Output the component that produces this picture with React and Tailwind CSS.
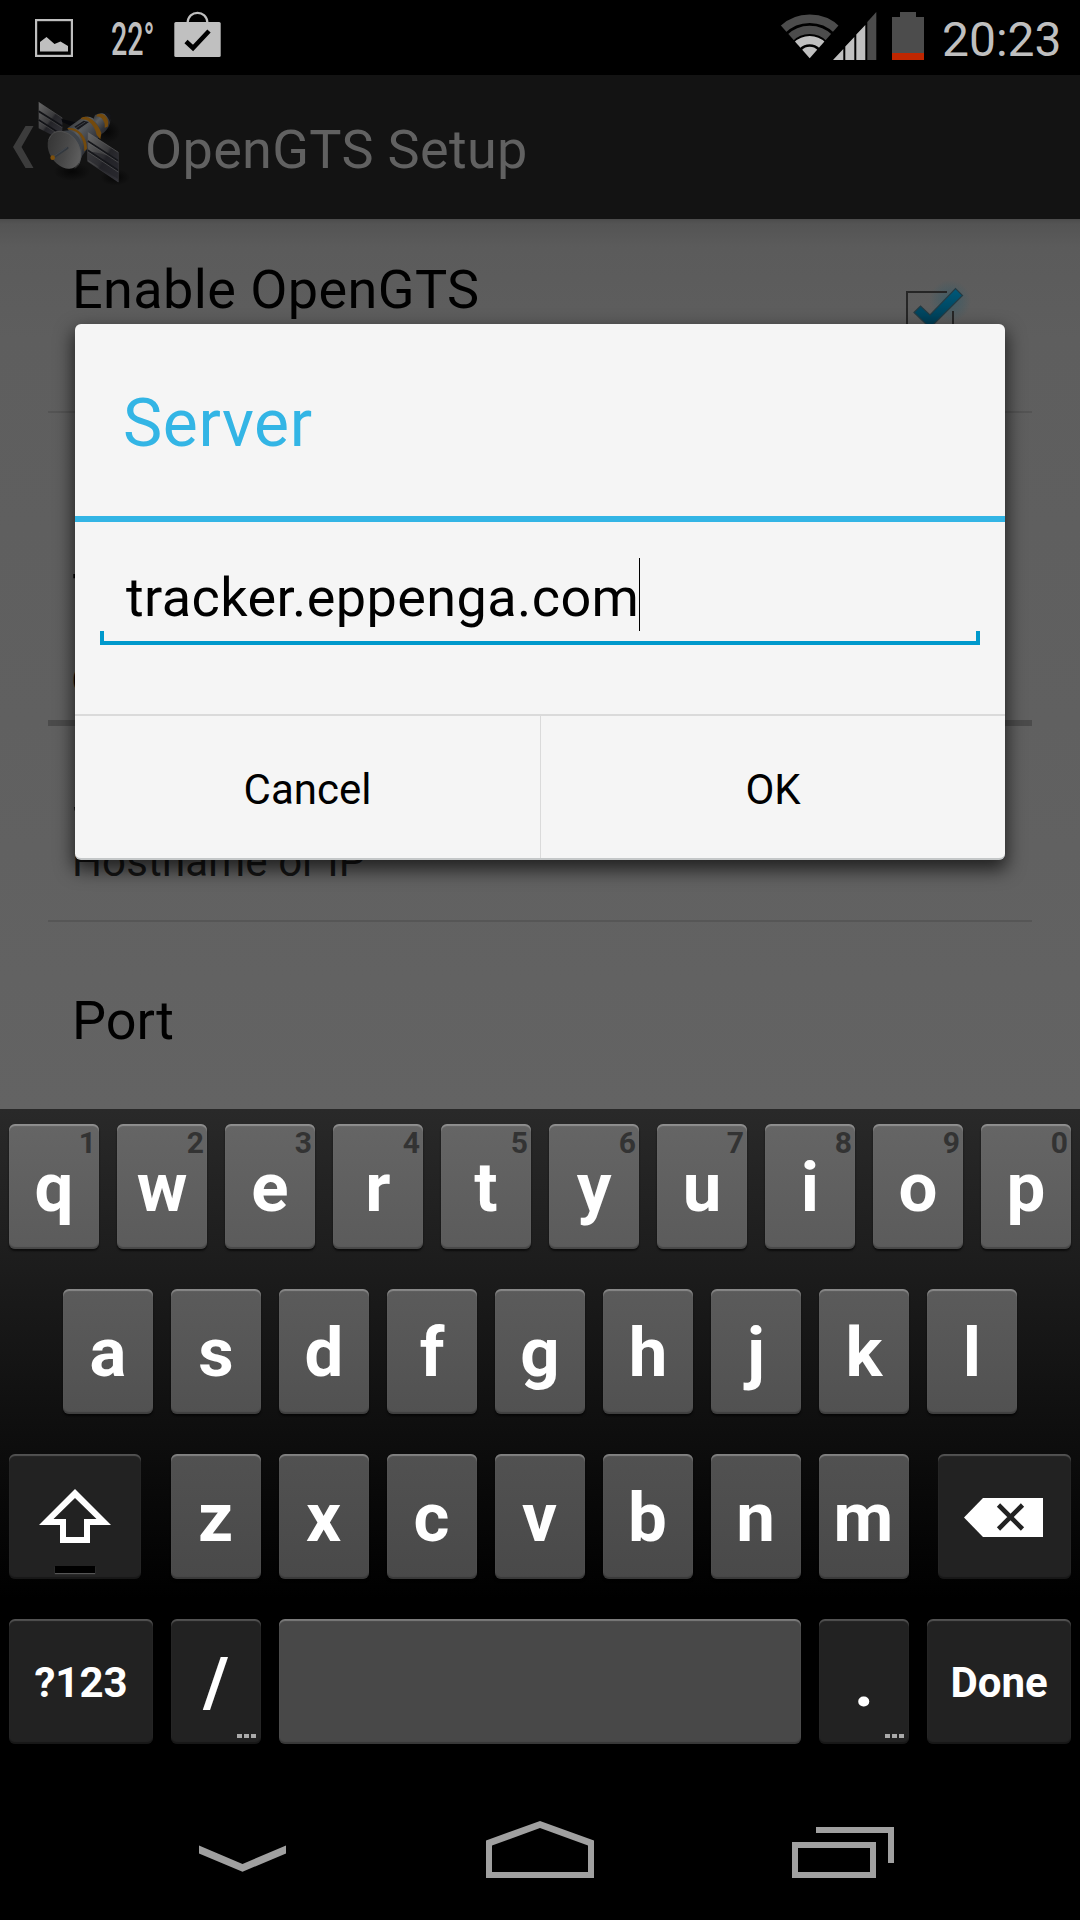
const topRow = ['q', 'w', 'e', 'r', 't', 'y', 'u', 'i', 'o', 'p'];
const homeRow = ['a', 's', 'd', 'f', 'g', 'h', 'j', 'k', 'l'];
const bottomRow = ['z', 'x', 'c', 'v', 'b', 'n', 'm'];

function StatusBar() {
  return (
    <header className="flex h-[75px] shrink-0 bg-black text-[#bfbfbf]">
      <svg className="ml-[35px] mt-[19px] h-[38px] w-[38px]" viewBox="0 0 38 38">
        <rect x="1" y="1" width="36" height="36" fill="none" stroke="#bfbfbf" strokeWidth="2.4" />
        <path d="M5 23 L11.500 18 L19.500 25 L25.500 22.500 L33 27 V32.500 H5 Z" fill="#bfbfbf" />
      </svg>
      <div className="ml-[38px] mt-[11px] w-[63px] origin-left scale-x-[0.61] text-[47px] font-medium leading-[56px]">22°</div>
      <svg className="mt-[11px] h-[48px] w-[48px]" viewBox="0 0 48 48">
        <path d="M13.500 12 C14 -1.500 33 -1.500 33.500 12" fill="none" stroke="#bfbfbf" strokeWidth="2.200" />
        <rect x="0.300" y="11" width="46.400" height="35" rx="1.500" fill="#c0c0c0" />
        <path d="M12 30.500 L19 37 L35 20" fill="none" stroke="#000" strokeWidth="4.600" />
      </svg>
      <div className="ml-auto flex pt-[12px]">
        <svg className="h-[48px] w-[97px]" viewBox="0 0 97 48">
          <clipPath id="wifi-cone"><path d="M29.700 46.300 L-10.300 0.800 V-20 H69.700 V0.800 Z" /></clipPath>
          <g clipPath="url(#wifi-cone)" fill="none">
            <circle cx="29.700" cy="46.300" r="39.500" stroke="#4c4c4c" strokeWidth="8.400" />
            <circle cx="29.700" cy="46.300" r="28.400" stroke="#4c4c4c" strokeWidth="8.400" />
            <circle cx="29.700" cy="46.300" r="18.200" stroke="#c0c0c0" strokeWidth="8.300" />
            <circle cx="29.700" cy="46.300" r="11.500" fill="#c0c0c0" />
          </g>
          <path d="M53 48 L63.300 37 V48 Z M65.300 34.500 L74.300 25 V48 H65.300 Z M76.300 22.500 L85.300 13 V48 H76.300 Z" fill="#c0c0c0" />
          <path d="M87.300 10 L96.300 0 V48 H87.300 Z" fill="#4c4c4c" />
        </svg>
        <svg className="ml-[15px] h-[48px] w-[32px]" viewBox="0 0 32 48">
          <path d="M0 5 H8 V0 H24 V5 H32 V48 H0 Z" fill="#4c4c4c" />
          <rect y="41" width="32" height="7" fill="#bf2600" />
        </svg>
        <div className="ml-[18px] w-[138px] whitespace-nowrap text-[48px] leading-[56px]">20:23</div>
      </div>
    </header>
  );
}

function Satellite() {
  return (
    <svg className="h-[87px] w-[94px]" viewBox="110 60 282 261">
      <defs>
        <linearGradient id="panel" x1="0" y1="0" x2="1" y2="1">
          <stop offset="0" stopColor="#686868" />
          <stop offset="0.500" stopColor="#3a3a3c" />
          <stop offset="0.560" stopColor="#242428" />
          <stop offset="1" stopColor="#34343a" />
        </linearGradient>
        <linearGradient id="body" x1="0" y1="0" x2="0.900" y2="1">
          <stop offset="0" stopColor="#26282b" />
          <stop offset="0.350" stopColor="#5a5d60" />
          <stop offset="0.700" stopColor="#303238" />
          <stop offset="1" stopColor="#202227" />
        </linearGradient>
        <linearGradient id="dish" x1="0" y1="0" x2="0.700" y2="1">
          <stop offset="0" stopColor="#303030" />
          <stop offset="0.600" stopColor="#484848" />
          <stop offset="1" stopColor="#606060" />
        </linearGradient>
        <radialGradient id="ground">
          <stop offset="0" stopColor="#060606" />
          <stop offset="1" stopColor="#060606" stopOpacity="0" />
        </radialGradient>
      </defs>
      <ellipse cx="215" cy="275" rx="55" ry="28" fill="url(#ground)" />
      <ellipse cx="345" cy="292" rx="45" ry="25" fill="url(#ground)" />
      <ellipse cx="320" cy="155" rx="40" ry="34" fill="url(#ground)" />
      <path d="M115 66 L186 114 V165 L150 163 L115 145 Z" fill="url(#panel)" />
      <path d="M115 94 L186 139 M115 120 L186 166" stroke="#111216" strokeWidth="6" />
      <path d="M115 67 L186 114 M115 98 L186 143 M115 124 L176 163" stroke="#5c5c5c" strokeWidth="1.500" fill="none" />
      <path d="M183 117 L232 128 L218 140 L186 126 Z" fill="#08090d" />
      <path d="M284 105 Q310 91 328 112 Q335 130 318 150 Q304 167 296 160 L276 125 Z" fill="url(#body)" />
      <path d="M292 103 Q308 98 318 111 Q327 124 322 140 L313 143 Q315 127 304 115 Q298 109 287 109 Z" fill="#744a0c" />
      <path d="M308 99 Q325 94 331 106 L329 126 Q321 106 308 99 Z" fill="#15161b" />
      <path d="M202 144 L244 114 Q261 104 278 115 L302 148 L303 166 L262 205 L235 242 L213 180 Z" fill="url(#body)" />
      <path d="M242 114 Q258 104 276 119 Q294 134 303 159 L300 178 L289 165 Q284 138 263 122 Q254 116 242 118 Z" fill="#744a0c" />
      <path d="M222 140 L250 122 L266 126 L233 149 Z" fill="#17181d" />
      <path d="M228 143 L255 126 M238 148 L266 131" stroke="#505357" strokeWidth="2" />
      <path d="M204 144 Q225 142 243 160 Q260 180 260 206 L252 214 Q253 184 236 163 Q223 150 200 147 Z" fill="#744a0c" />
      <path d="M187 153 Q218 145 235 172 Q249 194 244 231 L237 252 L208 181 Z" fill="#3e4349" />
      <ellipse cx="192" cy="209" rx="45" ry="61" transform="rotate(-32 192 209)" fill="url(#dish)" />
      <path d="M145 180 Q155 151 184 154 Q230 164 241 216 Q244 250 224 265" fill="none" stroke="#565656" strokeWidth="2" />
      <path d="M160 232 L201 204" stroke="#33383e" strokeWidth="7" strokeLinecap="round" />
      <path d="M160 229 L200 202" stroke="#555a60" strokeWidth="1.500" />
      <circle cx="157" cy="233" r="7" fill="#7d500c" />
      <path d="M262 157 L354 217 V306 L262 244 Z" fill="url(#panel)" />
      <path d="M262 215 Q305 215 354 243 V298 L262 239 Z" fill="#202127" fillOpacity="0.550" />
      <path d="M262 183 L354 243 M262 211 L354 272" stroke="#15161a" strokeWidth="6" />
      <path d="M262 157 L354 217 M262 187 L354 247 M262 215 L354 276" stroke="#696969" strokeWidth="1.600" />
      <path d="M262 157 V244 L354 306 V217" fill="none" stroke="#44444a" strokeWidth="1.500" />
    </svg>
  );
}

function ActionBar() {
  return (
    <div className="flex h-[144px] shrink-0 items-start bg-[#131313] text-[#616161]">
      <svg className="ml-[13px] mt-[51px] h-[42px] w-[21px]" viewBox="0 0 21 42">
        <path d="M12.500 0 H20.500 L8.500 21 L20.500 42 H12.500 L0 21 Z" fill="#3c3c3c" />
      </svg>
      <div className="ml-[3px] mt-[25px]"><Satellite /></div>
      <h1 className="ml-[14px] mt-[43px] whitespace-nowrap text-[54px] font-normal leading-[64px] tracking-[0.33px]">OpenGTS Setup</h1>
    </div>
  );
}

function Settings() {
  return (
    <main className="flex h-[890px] shrink-0 flex-col overflow-hidden bg-[linear-gradient(180deg,#4b4b4b_0px,#4f4f4f_2px,#545454_5px,#5b5b5b_28px,#5e5e5e_120px,#606060_500px,#636363_890px)] px-[48px] text-black">
      <section className="flex h-[194px] justify-between border-b-2 border-[#545454] pl-[24px] pr-[64px]">
        <div className="mt-[39px] whitespace-nowrap text-[54px] leading-[64px] tracking-[0.4px]">Enable OpenGTS</div>
        <svg className="mt-[62px] h-[72px] w-[72px] overflow-visible" viewBox="0 0 72 72">
          <defs>
            <linearGradient id="tick" x1="0" y1="0" x2="0" y2="1">
              <stop offset="0" stopColor="#00597a" />
              <stop offset="1" stopColor="#003a50" />
            </linearGradient>
            <radialGradient id="glow">
              <stop offset="0" stopColor="#2f5a68" />
              <stop offset="1" stopColor="#2f5a68" stopOpacity="0" />
            </radialGradient>
          </defs>
          <circle cx="54" cy="20" r="21" fill="url(#glow)" fillOpacity="0.700" />
          <path d="M51 11 H11 V58 H57 V30" fill="none" stroke="#262626" strokeWidth="2" />
          <path d="M18 31.500 L24.500 25 L34 34 L59.500 7.500 L66.500 14.500 L34 47 Z" fill="url(#tick)" stroke="#263b43" strokeWidth="1.200" />
        </svg>
      </section>
      <section className="h-[229px] pl-[24px] pt-[149px] text-[54px] leading-[64px]">T</section>
      <section className="h-[84px] border-b-[6px] border-[#4b4b4b] pl-[24px] pt-[15px] text-[42px] font-bold leading-[48px]">O</section>
      <section className="h-[196px] border-b-2 border-[#565656] pl-[24px] pt-[42px]">
        <div className="text-[54px] leading-[64px]">Server</div>
        <div className="mt-[6px] whitespace-nowrap text-[42px] leading-[48px] tracking-[0.15px] text-[#151515]">Hostname or IP</div>
      </section>
      <section className="pl-[24px] pt-[67px] text-[54px] leading-[64px]">Port</section>
    </main>
  );
}

function ServerDialog() {
  return (
    <div className="absolute left-[75px] top-[324px] flex h-[536px] w-[930px] flex-col overflow-hidden rounded-[6px] border-b-2 border-[#c4c7c8] bg-[#f5f5f5] text-black">
      <div className="h-[198px] shrink-0 border-b-[6px] border-[#33b5e5] pl-[48px] pt-[62px] text-[66px] leading-[76px] tracking-[0.6px] text-[#33b5e5]">Server</div>
      <div className="flex h-[192px] shrink-0 flex-col px-[25px] pt-[36px]">
        <div className="flex h-[73px] pl-[26px]">
          <span className="mt-[8px] whitespace-nowrap text-[54px] leading-[64px] tracking-[0.42px]">tracker.eppenga.com</span>
          <span className="h-[73px] w-px bg-black" />
        </div>
        <div className="h-[14px] border-x-4 border-b-4 border-[#0099cc]" />
      </div>
      <div className="grid min-h-0 grow grid-cols-[465px_1fr] border-t-2 border-[#dadada] text-center text-[42px] leading-[48px]">
        <div className="pt-[50px]">Cancel</div>
        <div className="border-l border-[#dadada] pt-[50px]">OK</div>
      </div>
    </div>
  );
}

const keyBase = 'relative flex h-[125px] shrink-0 justify-center rounded-[6px] font-bold text-white ';
const lightKey = 'shadow-[inset_0_2px_1px_rgba(255,255,255,0.28),inset_0_-2px_1px_rgba(0,0,0,0.22),0_2px_2px_rgba(0,0,0,0.6)] ';
const darkKey = 'bg-[#222222] shadow-[inset_0_2px_1px_rgba(255,255,255,0.22),inset_0_-2px_1px_rgba(0,0,0,0.3)] ';

function Letter({ label, tone, hint }) {
  return (
    <div className={keyBase + lightKey + 'w-[90px] ' + tone}>
      <span className="mt-[24px] text-[69px] leading-[80px]">{label}</span>
      {hint && <span className="absolute right-[3px] top-px text-[30px] leading-[36px] text-[#333333]">{hint}</span>}
    </div>
  );
}

function MoreDots() {
  return (
    <div className="absolute bottom-[6px] right-[5px] flex gap-[2px]">
      <i className="h-[4px] w-[5px] bg-[#aaaaaa]" />
      <i className="h-[4px] w-[5px] bg-[#aaaaaa]" />
      <i className="h-[4px] w-[5px] bg-[#aaaaaa]" />
    </div>
  );
}

function Keyboard() {
  return (
    <section className="flex h-[668px] shrink-0 flex-col gap-[40px] bg-[linear-gradient(180deg,#292929_0px,#1c1c1c_160px,#0e0e0e_325px,#000_490px)] px-[9px] pt-[15px]">
      <div className="flex gap-[18px]">
        {topRow.map((k, i) => (
          <Letter key={k} label={k} hint={String((i + 1) % 10)} tone="bg-linear-to-b from-[#656565] to-[#5b5b5b]" />
        ))}
      </div>
      <div className="flex gap-[18px] pl-[54px]">
        {homeRow.map((k) => <Letter key={k} label={k} tone="bg-linear-to-b from-[#5b5b5b] to-[#515151]" />)}
      </div>
      <div className="flex justify-between">
        <div className={keyBase + darkKey + 'w-[132px]'}>
          <svg className="mt-[35px] h-[54px] w-[72px]" viewBox="0 0 72 54">
            <path fillRule="evenodd" fill="#fff" d="M36 0 L72 36 H51 V54 H21 V36 H0 Z M36 9 L14.500 30 H27 V48 H45 V30 H57.500 Z" />
          </svg>
          <div className="absolute bottom-[6px] left-[46px] h-[7px] w-[40px] bg-black shadow-[0_1px_1px_#555]" />
        </div>
        <div className="flex gap-[18px]">
          {bottomRow.map((k) => <Letter key={k} label={k} tone="bg-linear-to-b from-[#515151] to-[#494949]" />)}
        </div>
        <div className={keyBase + darkKey + 'w-[133px]'}>
          <svg className="-ml-[2px] mt-[44px] h-[39px] w-[79px]" viewBox="0 0 79 39">
            <path d="M0 19.500 L19 0 H79 V39 H19 Z" fill="#fff" />
            <path d="M34.500 7 L58.500 31 M58.500 7 L34.500 31" stroke="#222" strokeWidth="4.600" />
          </svg>
        </div>
      </div>
      <div className="flex gap-[18px]">
        <div className={keyBase + darkKey + 'w-[144px]'}><span className="mt-[40px] text-[42px] leading-[48px]">?123</span></div>
        <div className={keyBase + darkKey + 'w-[90px]'}><span className="mt-[24px] text-[69px] leading-[80px]">/</span><MoreDots /></div>
        <div className={keyBase + lightKey + 'w-[522px] bg-[#484848]'} />
        <div className={keyBase + darkKey + 'w-[90px]'}><span className="mt-[24px] text-[69px] leading-[80px]">.</span><MoreDots /></div>
        <div className={keyBase + darkKey + 'w-[144px]'}><span className="mt-[40px] text-[42px] leading-[48px]">Done</span></div>
      </div>
    </section>
  );
}

function NavBar() {
  return (
    <nav className="flex grow items-start bg-black">
      <svg className="ml-[199px] mt-[68px] h-[27px] w-[87px]" viewBox="0 0 87 27">
        <path d="M0 0.500 L43.500 19 L87 0.500 V8.500 L43.500 26.800 L0 8.500 Z" fill="#a0a0a0" />
      </svg>
      <svg className="ml-[200px] mt-[44px] h-[57px] w-[108px]" viewBox="0 0 108 57">
        <path fillRule="evenodd" d="M54 0 L108 19.500 V57 H0 V19.500 Z M54 7 L6 24.500 V51 H102 V24.500 Z" fill="#a0a0a0" />
      </svg>
      <svg className="ml-[198px] mt-[50px] h-[51px] w-[102px]" viewBox="0 0 102 51">
        <path fillRule="evenodd" d="M0 15 H84 V51 H0 Z M6 21 V45 H78 V21 Z M24 0 H102 V36 H96 V6 H24 Z" fill="#a0a0a0" />
      </svg>
    </nav>
  );
}

export default function App() {
  return (
    <div className="relative flex h-[1920px] w-[1080px] flex-col overflow-hidden bg-black font-['Roboto',sans-serif]">
      <StatusBar />
      <ActionBar />
      <Settings />
      <div className="absolute left-[75px] top-[324px] h-[536px] w-[930px] rounded-[6px] shadow-[0_8px_18px_2px_rgba(0,0,0,0.65)]" />
      <ServerDialog />
      <Keyboard />
      <NavBar />
    </div>
  );
}
